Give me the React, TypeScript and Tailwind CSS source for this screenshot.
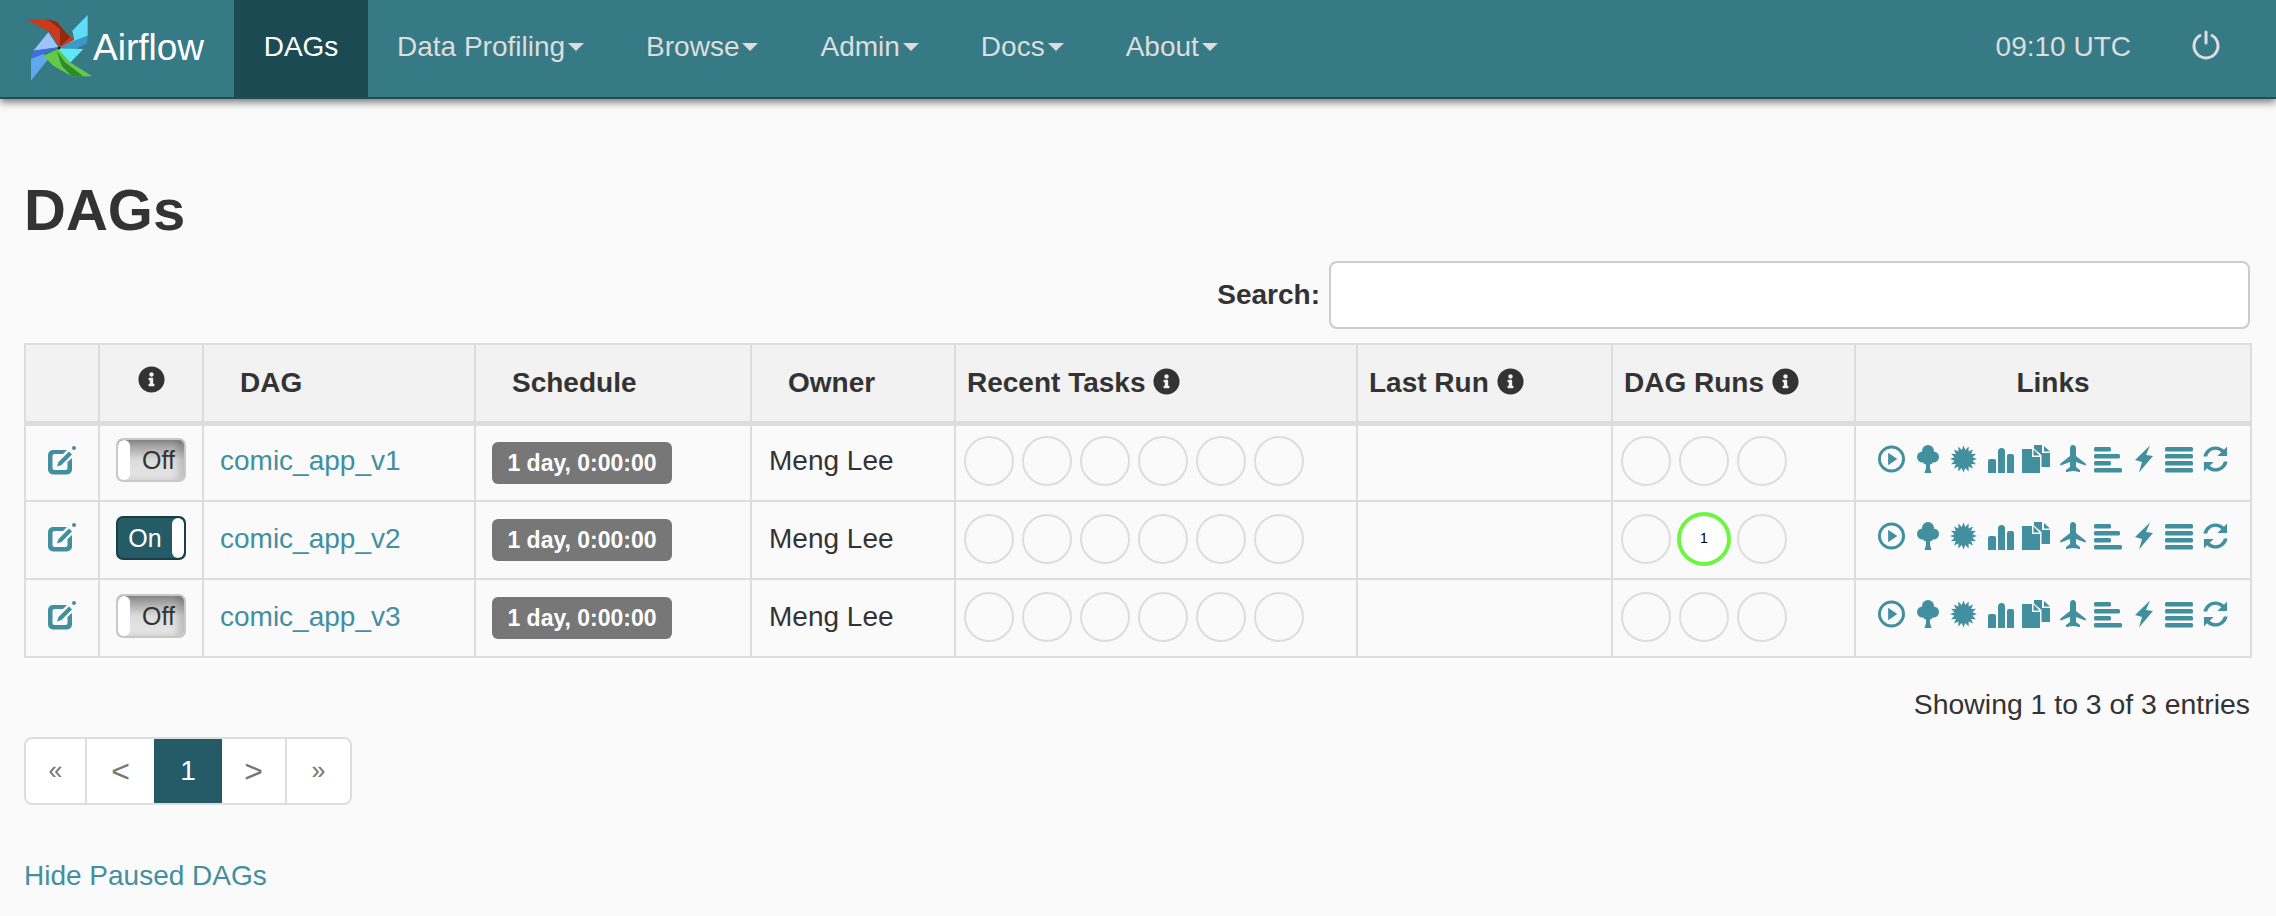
import { FaInfoCircle } from 'react-icons/fa';

const navItems = ['Data Profiling', 'Browse', 'Admin', 'Docs', 'About'];

const dags = [
  { name: 'comic_app_v1', on: false, run: false },
  { name: 'comic_app_v2', on: true, run: true },
  { name: 'comic_app_v3', on: false, run: false },
];

// 16 point burst for the certificate icon
const burst = Array.from({ length: 32 })
  .map((_, i) => {
    const r = i % 2 === 0 ? 14 : 9.5;
    const a = (i * Math.PI) / 16 - Math.PI / 2;
    return `${14 + r * Math.cos(a)},${14 + r * Math.sin(a)}`;
  })
  .join(' ');

function Logo() {
  return (
    <svg width="90" height="80" viewBox="0 0 270 240" className="shrink-0">
      <polygon points="218,18 172,65 178,92 130,115 218,80" fill="#5fdcf8" />
      <polygon points="130,115 218,80 215,105 180,120" fill="#3f96c8" />
      <polygon points="130,118 205,120 162,165 140,140" fill="#5ce8f5" />
      <polygon points="32,30 95,30 135,55 178,92 135,115 105,70" fill="#cc3a1c" />
      <polygon points="95,30 125,38 165,85 135,112 135,60" fill="#8f2a12" />
      <polygon points="100,70 130,115 55,125" fill="#9dc3f8" />
      <polygon points="55,125 130,115 85,135 48,150" fill="#3f6fdc" />
      <polygon points="48,150 85,135 100,150 48,215" fill="#62a8f0" />
      <polygon points="130,120 85,140 115,170 170,202 232,202 165,160" fill="#62c94a" />
      <polygon points="125,125 140,170 170,202 205,202 150,160" fill="#2f8a2a" />
      <circle cx="132" cy="117" r="4" fill="#111111" />
    </svg>
  );
}

function Caret() {
  return <span className="ml-[3px] inline-block h-0 w-0 border-x-[8px] border-t-[8px] border-x-transparent border-t-[#dddddd] align-middle" />;
}

function Info() {
  return <FaInfoCircle size={27} className="inline-block align-[-3px] text-[#333333]" />;
}

function EditIcon() {
  return (
    <svg width="28" height="30" viewBox="0 0 28 30" fill="#428f9f">
      <path d="M5 5H19L15 9H6.500a2 2 0 0 0-2 2V23a2 2 0 0 0 2 2H17.500a2 2 0 0 0 2-2V17L24 13V24.500a5 5 0 0 1-5 5H5a5 5 0 0 1-5-5V10a5 5 0 0 1 5-5z" />
      <polygon points="21,6.500 24,9.500 13.500,20 9,21.500 10.500,17" />
      <circle cx="26" cy="3" r="2" />
    </svg>
  );
}

function LinkIcons() {
  return (
    <div className="-mt-[5px] flex items-center justify-center gap-[8px] text-[#428f9f]">
      <svg width="27" height="28" viewBox="0 0 28 28" fill="currentColor">
        <path fillRule="evenodd" d="M14 0a14 14 0 1 0 0 28 14 14 0 0 0 0-28zm0 3a11 11 0 1 1 0 22 11 11 0 0 1 0-22z" />
        <polygon points="10.500,7.500 20,14 10.500,20.500" />
      </svg>
      <svg width="22" height="28" viewBox="0 0 22 28" fill="currentColor" className="ml-[4px]">
        <circle cx="11" cy="6" r="6" />
        <circle cx="5.500" cy="12" r="5.500" />
        <circle cx="16.500" cy="12" r="5.500" />
        <circle cx="11" cy="14" r="6" />
        <polygon points="9,16 13,16 13,23 14.500,28 7.500,28 9,23" />
      </svg>
      <svg width="27" height="28" viewBox="0 0 28 28" fill="currentColor" className="ml-[3px]">
        <polygon points={burst} />
      </svg>
      <svg width="26" height="28" viewBox="0 0 26 28" fill="currentColor" className="ml-[3px]">
        <path d="M0 16a2 2 0 0 1 2-2h4a2 2 0 0 1 2 2v12H0z" />
        <path d="M10 6.500a3.500 3.500 0 0 1 7 0V28h-7z" />
        <path d="M19 11a2 2 0 0 1 2-2h3a2 2 0 0 1 2 2v17h-7z" />
      </svg>
      <svg width="28" height="28" viewBox="0 0 28 28" fill="currentColor">
        <path d="M0 4H10V12H18V28H0z" />
        <path d="M12 0H20V8H28V22H19.500V10L12 3.500z" />
        <polygon points="11.500,4.500 17.500,10.500 11.500,10.500" />
        <polygon points="22,1 28,6.500 22,6.500" />
      </svg>
      <svg width="26" height="28" viewBox="0 0 26 28" fill="currentColor" className="ml-[2px]">
        <path d="M13 0c1.800 0 3 1.500 3 3.500V11l9.500 7.500c.5.500.5 2-.3 2L16 17v5l4 3v2c0 .500-4-1-7-1s-7 1.500-7 1v-2l4-3v-5L.800 20.500c-.800 0-.800-1.500-.300-2L10 11V3.500C10 1.500 11.200 0 13 0z" />
      </svg>
      <svg width="28" height="28" viewBox="0 0 28 28" fill="currentColor">
        <rect x="0" y="2" width="17" height="4.500" rx="1.500" />
        <rect x="0" y="9" width="26" height="4.500" rx="1.500" />
        <rect x="0" y="16" width="17" height="4.500" rx="1.500" />
        <rect x="0" y="23" width="28" height="4.500" rx="1.500" />
      </svg>
      <svg width="18" height="28" viewBox="0 0 18 28" fill="currentColor" className="ml-[5px]">
        <polygon points="15,0.500 0,15 7,17 4,27.500 18,11 11,10" />
      </svg>
      <svg width="28" height="28" viewBox="0 0 28 28" fill="currentColor" className="ml-[4px]">
        <rect x="0" y="2" width="28" height="4.500" rx="1.500" />
        <rect x="0" y="9" width="28" height="4.500" rx="1.500" />
        <rect x="0" y="16" width="28" height="4.500" rx="1.500" />
        <rect x="0" y="23" width="28" height="4.500" rx="1.500" />
      </svg>
      <svg width="27" height="28" viewBox="0 0 28 28" fill="currentColor" className="ml-[1px]">
        <path d="M14 1c3.500 0 6.500 1.300 8.800 3.500L26 1v10H16l4-4c-1.600-1.500-3.700-2.500-6-2.500-4.200 0-7.700 3-8.500 7H1.500C2.300 5.800 7.600 1 14 1z" />
        <path d="M14 27c-3.500 0-6.500-1.300-8.800-3.500L2 27V17h10l-4 4c1.600 1.500 3.700 2.500 6 2.500 4.200 0 7.700-3 8.500-7h4c-.8 5.700-6.100 10.500-12.500 10.500z" />
      </svg>
    </div>
  );
}

function Toggle({ on }: { on: boolean }) {
  if (on) {
    return (
      <div className="flex h-[44px] w-[70px] overflow-hidden rounded-[7px] border-2 border-[#163f47] bg-[#255b66] text-[25px] text-white">
        <span className="flex-1 text-center leading-[40px]">On</span>
        <span className="w-[12px] rounded-[6px] bg-white" />
      </div>
    );
  }
  return (
    <div className="flex h-[44px] w-[70px] overflow-hidden rounded-[7px] border-2 border-[#c8c8c8] bg-gradient-to-b from-[#8c8c8c] via-[#dcdcdc] to-[#e6e6e6] text-[25px] text-[#333333] shadow-[inset_-6px_0_6px_rgba(0,0,0,0.15)]">
      <span className="w-[12px] rounded-[6px] bg-white" />
      <span className="flex-1 pl-[3px] text-center leading-[40px]">Off</span>
    </div>
  );
}

function Circles({ count, active }: { count: number; active?: number }) {
  return (
    <div className="flex items-center gap-[8px]">
      {Array.from({ length: count }).map((_, i) =>
        i === active ? (
          <div key={i} className="-mx-[2px] flex h-[54px] w-[54px] items-center justify-center rounded-full border-[4px] border-[#6ef542] bg-white text-[14px] text-black">
            1
          </div>
        ) : (
          <div key={i} className="h-[50px] w-[50px] rounded-full border-2 border-[#dddddd]" />
        ),
      )}
    </div>
  );
}

const thClass = 'border-2 border-b-[5px] border-[#dddddd] bg-[#f2f2f2] font-bold align-middle';
const tdClass = 'border-2 border-[#dddddd] pb-[3px] align-middle';

export default function App() {
  return (
    <div className="min-h-[916px] overflow-hidden bg-[#fafafa] font-['Liberation_Sans',Arial,sans-serif] text-[28px] text-[#333333]">
      <nav className="flex h-[99px] items-stretch border-b-2 border-[#1f4e57] bg-[#367a86] shadow-[0_3px_8px_rgba(0,0,0,0.55)]">
        <div className="flex w-[234px] items-center pl-[15px] text-white">
          <Logo />
          <span className="-ml-[12px] pb-[2px] text-[37px]">Airflow</span>
        </div>
        <a className="flex w-[134px] items-center justify-center bg-[#1c4a53] pb-[3px] font-normal text-white">DAGs</a>
        <div className="flex items-center pb-[3px] pl-[29px] text-[#dddddd]">
          {navItems.map((item) => (
            <a key={item} className="mr-[62px] flex items-center whitespace-nowrap">
              {item}
              <Caret />
            </a>
          ))}
        </div>
        <div className="ml-auto flex items-center pb-[3px] text-[#dddddd]">
          <span>09:10 UTC</span>
          <svg width="30" height="30" viewBox="0 0 30 30" fill="none" stroke="#dddddd" strokeWidth="3" strokeLinecap="round" className="mr-[55px] ml-[60px] -translate-y-[2px]">
            <path d="M9 5.500a12 12 0 1 0 12 0" />
            <path d="M15 2v11" />
          </svg>
        </div>
      </nav>

      <main className="px-[24px] pr-[26px]">
        <h1 className="mt-[76px] text-[58px] leading-[70px] font-bold">DAGs</h1>

        <div className="mt-[16px] flex items-center justify-end">
          <label className="font-bold">Search:</label>
          <input className="ml-[9px] h-[68px] w-[921px] rounded-[8px] border-2 border-[#cccccc] bg-white" />
        </div>

        <table className="mt-[14px] w-[2226px] table-fixed border-collapse">
          <colgroup>
            <col className="w-[74px]" />
            <col className="w-[104px]" />
            <col className="w-[272px]" />
            <col className="w-[276px]" />
            <col className="w-[204px]" />
            <col className="w-[402px]" />
            <col className="w-[255px]" />
            <col className="w-[243px]" />
            <col className="w-[396px]" />
          </colgroup>
          <thead>
            <tr className="h-[79px]">
              <th className={thClass} />
              <th className={`${thClass} text-center`}>
                <span className="relative -top-[2px]"><Info /></span>
              </th>
              <th className={`${thClass} pl-[36px] text-left`}>DAG</th>
              <th className={`${thClass} pl-[36px] text-left`}>Schedule</th>
              <th className={`${thClass} pl-[36px] text-left`}>Owner</th>
              <th className={`${thClass} pl-[11px] text-left`}>Recent Tasks <Info /></th>
              <th className={`${thClass} pl-[11px] text-left`}>Last Run <Info /></th>
              <th className={`${thClass} pl-[11px] text-left`}>DAG Runs <Info /></th>
              <th className={`${thClass} text-center`}>Links</th>
            </tr>
          </thead>
          <tbody>
            {dags.map((dag) => (
              <tr key={dag.name} className="h-[78px]">
                <td className={tdClass}>
                  <div className="-mt-[3px] flex justify-center"><EditIcon /></div>
                </td>
                <td className={tdClass}>
                  <div className="-mt-[2px] flex justify-center"><Toggle on={dag.on} /></div>
                </td>
                <td className={`${tdClass} pl-[16px] text-[#428f9f]`}>{dag.name}</td>
                <td className={`${tdClass} pl-[16px]`}>
                  <span className="relative top-[1px] inline-block h-[42px] w-[180px] rounded-[6px] bg-[#777777] text-center text-[23px] leading-[42px] font-bold text-white">1 day, 0:00:00</span>
                </td>
                <td className={`${tdClass} pl-[17px]`}>Meng Lee</td>
                <td className={`${tdClass} pl-[8px]`}><Circles count={6} /></td>
                <td className={tdClass} />
                <td className={`${tdClass} pl-[8px]`}><Circles count={3} active={dag.run ? 1 : undefined} /></td>
                <td className={tdClass}><LinkIcons /></td>
              </tr>
            ))}
          </tbody>
        </table>

        <div className="mt-[25px] text-right text-[28.4px]">Showing 1 to 3 of 3 entries</div>

        <div className="mt-[11px] flex h-[68px] w-[328px] items-stretch overflow-hidden rounded-[8px] border-2 border-[#dddddd] bg-white text-[32px] text-[#777777]">
          <span className="flex w-[61px] items-center justify-center border-r-2 border-[#dddddd] text-[25px]">«</span>
          <span className="flex w-[67px] items-center justify-center">&lt;</span>
          <span className="-my-[2px] flex w-[68px] items-center justify-center bg-[#255b66] text-[28px] text-white">1</span>
          <span className="flex w-[65px] items-center justify-center border-r-2 border-[#dddddd]">&gt;</span>
          <span className="flex flex-1 items-center justify-center text-[25px]">»</span>
        </div>

        <a className="mt-[50px] block text-[#428f9f]">Hide Paused DAGs</a>
      </main>
    </div>
  );
}
